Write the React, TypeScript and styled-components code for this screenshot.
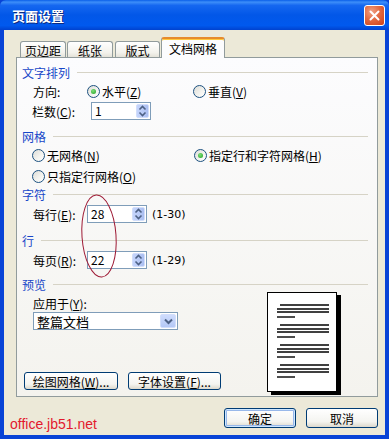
import React from "react";
import styled, { createGlobalStyle } from "styled-components";

const Global = createGlobalStyle`
  html, body { margin: 0; padding: 0; background: #fff; }
  body {
    font-family: "Noto Sans CJK SC", "Noto Sans", "DejaVu Sans", sans-serif;
    font-size: 12px;
    color: #000;
  }
  * { box-sizing: border-box; }
`;

const Window = styled.div`
  position: relative;
  width: 389px;
  height: 439px;
  display: flex;
  flex-direction: column;
  background: #0843d6;
`;

const TitleBar = styled.div`
  height: 30px;
  flex: none;
  display: flex;
  align-items: center;
  justify-content: space-between;
  padding: 0 4px 0 12px;
  background: linear-gradient(
    #0a5fe9 0%,
    #3d8ef9 7%,
    #1567f0 18%,
    #0257e8 50%,
    #0059ee 85%,
    #0042cf 100%
  );
  color: #fff;
  font-weight: bold;
  font-size: 13px;
  text-shadow: 1px 1px #0b2a80;
  border-radius: 6px 6px 0 0;
`;

const CloseButton = styled.div`
  width: 21px;
  height: 21px;
  border: 1px solid #fff;
  border-radius: 3px;
  background: radial-gradient(circle at 35% 30%, #f1a184 0%, #e26a42 45%, #cc3f17 100%);
  display: flex;
  align-items: center;
  justify-content: center;
`;

const Frame = styled.div`
  flex: 1;
  display: flex;
  padding: 0 4px 4px;
`;

const Client = styled.div`
  flex: 1;
  display: flex;
  flex-direction: column;
  background: #ece9d8;
  padding: 7px 7px 0 12px;
`;

const TabRow = styled.div`
  display: flex;
  align-items: flex-end;
  height: 21px;
  margin-bottom: -1px;
  position: relative;
  z-index: 1;
`;

const Tab = styled.div<{ $w: number; $active?: boolean; $gap?: number }>`
  width: ${(p) => p.$w}px;
  margin-left: ${(p) => p.$gap ?? 0}px;
  height: ${(p) => (p.$active ? 21 : 16)}px;
  margin-bottom: ${(p) => (p.$active ? 0 : 1)}px;
  border: 1px solid #919b9c;
  border-bottom: none;
  border-radius: 3px 3px 0 0;
  display: flex;
  align-items: center;
  justify-content: center;
  padding-top: ${(p) => (p.$active ? 0 : 1)}px;
  background: ${(p) =>
    p.$active ? "#fcfcfe" : "linear-gradient(#ffffff, #f3f2ec 70%, #e4e2d8)"};
  border-top: ${(p) => (p.$active ? "2px solid #e68b2c" : "1px solid #919b9c")};
  box-shadow: ${(p) => (p.$active ? "inset 0 1px #ffc83c" : "none")};
`;

const Panel = styled.div`
  height: 340px;
  flex: none;
  border: 1px solid #919b9c;
  background: linear-gradient(#fcfcfe, #f4f3ee);
  padding: 0 9px 0 5px;
  display: flex;
  flex-direction: column;
`;

const Heading = styled.div<{ $top: number }>`
  display: flex;
  align-items: center;
  gap: 7px;
  height: 16px;
  margin-top: ${(p) => p.$top}px;
  color: #1847c8;
  &::after {
    content: "";
    flex: 1;
    height: 1px;
    background: #d6d3c6;
  }
`;

const Row = styled.div<{ $top: number; $indent: number }>`
  display: flex;
  align-items: center;
  height: 18px;
  margin-top: ${(p) => p.$top}px;
  padding-left: ${(p) => p.$indent}px;
`;

const Label = styled.span<{ $w?: number }>`
  width: ${(p) => (p.$w ? `${p.$w}px` : "auto")};
  flex: none;
  white-space: nowrap;
`;

const Key = styled.span`
  text-decoration: underline;
`;

const RadioItem = styled.div<{ $w?: number }>`
  display: flex;
  align-items: center;
  gap: 2px;
  width: ${(p) => (p.$w ? `${p.$w}px` : "auto")};
  flex: none;
  white-space: nowrap;
`;

const RadioCircle = styled.span<{ $checked?: boolean }>`
  width: 13px;
  height: 13px;
  border-radius: 50%;
  border: 1px solid #1c5180;
  background: linear-gradient(135deg, #dcdcd7 0%, #f4f4f0 60%, #ffffff 100%);
  display: flex;
  align-items: center;
  justify-content: center;
  flex: none;
  &::after {
    content: "";
    display: ${(p) => (p.$checked ? "block" : "none")};
    width: 5px;
    height: 5px;
    border-radius: 50%;
    background: radial-gradient(circle at 40% 35%, #7fe07a, #21a121);
  }
`;

const SpinBox = styled.div<{ $w: number }>`
  width: ${(p) => p.$w}px;
  height: 18px;
  border: 1px solid #7f9db9;
  background: #fff;
  display: flex;
  align-items: stretch;
  flex: none;
`;

const SpinValue = styled.span`
  flex: 1;
  padding-left: 3px;
  line-height: 16px;
`;

const SpinButtons = styled.div`
  width: 13px;
  margin: 1px 1px 1px 0;
  border-radius: 2px;
  border: 1px solid #d2defb;
  background: linear-gradient(90deg, #c5d5fc, #b7c9f6 60%, #a9bdf0);
  display: flex;
  flex-direction: column;
  align-items: center;
  justify-content: center;
  gap: 1px;
`;

const Range = styled.span`
  margin-left: 5px;
  font-family: "DejaVu Sans", sans-serif;
  font-size: 11px;
`;

const PreviewArea = styled.div`
  display: flex;
  justify-content: space-between;
  align-items: flex-start;
`;

const LeftCol = styled.div`
  display: flex;
  flex-direction: column;
`;

const ApplyLabel = styled.div`
  height: 16px;
  margin-top: 3px;
  padding-left: 11px;
`;

const Select = styled.div`
  margin: 1px 0 0 11px;
  width: 145px;
  height: 18px;
  border: 1px solid #7f9db9;
  background: #fff;
  display: flex;
  align-items: center;
  justify-content: space-between;
  padding: 0 1px 0 3px;
  font-size: 13px;
`;

const SelectArrow = styled.span`
  width: 16px;
  height: 14px;
  border-radius: 2px;
  border: 1px solid #d2defb;
  background: linear-gradient(#cfdcfd, #b4c8f6);
  display: flex;
  align-items: center;
  justify-content: center;
`;

const ButtonRow = styled.div<{ $top: number; $indent: number }>`
  display: flex;
  gap: 10px;
  margin-top: ${(p) => p.$top}px;
  padding-left: ${(p) => p.$indent}px;
`;

const Button = styled.div<{ $w: number; $h: number; $default?: boolean }>`
  width: ${(p) => p.$w}px;
  height: ${(p) => p.$h}px;
  border: 1px solid #003c74;
  border-radius: 3px;
  background: linear-gradient(#ffffff 0%, #f4f4f0 70%, #dcd8cc 100%);
  display: flex;
  align-items: center;
  justify-content: center;
  white-space: nowrap;
  box-shadow: ${(p) =>
    p.$default ? "inset 0 0 0 1px #cee7ff, inset 0 0 0 2px #98b8ea" : "none"};
`;

const PageWrap = styled.div`
  margin-right: 31px;
  width: 70px;
  height: 100px;
  border: 1px solid #000;
  background: #fff;
  box-shadow: 4px 3px 0 #000;
`;

const BottomRow = styled.div`
  display: flex;
  justify-content: space-between;
  align-items: flex-start;
  margin-top: 11px;
`;

const Footer = styled.div`
  margin: 8px 0 0 -6px;
  font-family: "Liberation Sans", Arial, sans-serif;
  font-size: 14px;
  line-height: 16px;
  color: #e3182d;
`;

const Annotation = styled.svg`
  position: absolute;
  left: 79px;
  top: 192px;
  width: 40px;
  height: 88px;
  pointer-events: none;
`;

const SpinArrows = () => (
  <svg width="9" height="12" viewBox="0 0 9 12">
    <path d="M1.5 4.5 L4.5 1.5 L7.5 4.5" fill="none" stroke="#4d6185" strokeWidth="1.6" />
    <path d="M1.5 7.5 L4.5 10.5 L7.5 7.5" fill="none" stroke="#4d6185" strokeWidth="1.6" />
  </svg>
);

const Spinner: React.FC<{ value: string; w: number }> = ({ value, w }) => (
  <SpinBox $w={w}>
    <SpinValue>{value}</SpinValue>
    <SpinButtons>
      <SpinArrows />
    </SpinButtons>
  </SpinBox>
);

const Radio: React.FC<{ checked?: boolean; w?: number; children: React.ReactNode }> = ({
  checked,
  w,
  children,
}) => (
  <RadioItem $w={w}>
    <RadioCircle $checked={checked} />
    <span>{children}</span>
  </RadioItem>
);

const PageLines = () => {
  const groups = [13, 33, 53, 73];
  return (
    <svg width="68" height="98" viewBox="0 0 68 98">
      {groups.map((y) => (
        <g key={y} stroke="#000" strokeWidth="1.4">
          <line x1="12" y1={y - 1} x2="61" y2={y - 1} />
          <line x1="9" y1={y + 3} x2="61" y2={y + 3} />
          <line x1="9" y1={y + 6} x2="61" y2={y + 6} />
          <line x1="9" y1={y + 11} x2="27" y2={y + 11} />
        </g>
      ))}
    </svg>
  );
};

export default function App() {
  return (
    <>
      <Global />
      <Window>
        <TitleBar>
          <span>页面设置</span>
          <CloseButton>
            <svg width="11" height="11" viewBox="0 0 11 11">
              <path d="M1.5 1.5 L9.5 9.5 M9.5 1.5 L1.5 9.5" stroke="#fff" strokeWidth="2" strokeLinecap="round" />
            </svg>
          </CloseButton>
        </TitleBar>
        <Frame>
          <Client>
            <TabRow>
              <Tab $w={46} $gap={4}>页边距</Tab>
              <Tab $w={46} $gap={1}>纸张</Tab>
              <Tab $w={45} $gap={2}>版式</Tab>
              <Tab $w={64} $gap={1} $active>
                文档网格
              </Tab>
            </TabRow>
            <Panel>
              <Heading $top={6}>文字排列</Heading>
              <Row $top={2} $indent={11}>
                <Label $w={54}>方向:</Label>
                <Radio checked w={106}>
                  水平(<Key>Z</Key>)
                </Radio>
                <Radio>
                  垂直(<Key>V</Key>)
                </Radio>
              </Row>
              <Row $top={2} $indent={10}>
                <Label $w={59}>
                  栏数(<Key>C</Key>):
                </Label>
                <Spinner value="1" w={60} />
              </Row>

              <Heading $top={8}>网格</Heading>
              <Row $top={2} $indent={10}>
                <Radio w={162}>
                  无网格(<Key>N</Key>)
                </Radio>
                <Radio checked>
                  指定行和字符网格(<Key>H</Key>)
                </Radio>
              </Row>
              <Row $top={3} $indent={10}>
                <Radio>
                  只指定行网格(<Key>O</Key>)
                </Radio>
              </Row>

              <Heading $top={1}>字符</Heading>
              <Row $top={3} $indent={11}>
                <Label $w={54}>
                  每行(<Key>E</Key>):
                </Label>
                <Spinner value="28" w={60} />
                <Range>(1-30)</Range>
              </Row>

              <Heading $top={9}>行</Heading>
              <Row $top={3} $indent={11}>
                <Label $w={54}>
                  每页(<Key>R</Key>):
                </Label>
                <Spinner value="22" w={60} />
                <Range>(1-29)</Range>
              </Row>

              <Heading $top={7}>预览</Heading>
              <PreviewArea>
                <LeftCol>
                  <ApplyLabel>
                    应用于(<Key>Y</Key>):
                  </ApplyLabel>
                  <Select>
                    <span>整篇文档</span>
                    <SelectArrow>
                      <svg width="9" height="7" viewBox="0 0 9 7">
                        <path d="M1 1.5 L4.5 5 L8 1.5" fill="none" stroke="#4d6185" strokeWidth="2" />
                      </svg>
                    </SelectArrow>
                  </Select>
                  <ButtonRow $top={42} $indent={2}>
                    <Button $w={94} $h={18}>
                      绘图网格(<Key>W</Key>)...
                    </Button>
                    <Button $w={93} $h={18}>
                      字体设置(<Key>F</Key>)...
                    </Button>
                  </ButtonRow>
                </LeftCol>
                <PageWrap>
                  <PageLines />
                </PageWrap>
              </PreviewArea>
            </Panel>
            <BottomRow>
              <Footer>office.jb51.net</Footer>
              <ButtonRow $top={0} $indent={0}>
                <Button $w={72} $h={20} $default>
                  确定
                </Button>
                <Button $w={72} $h={20}>
                  取消
                </Button>
              </ButtonRow>
            </BottomRow>
          </Client>
        </Frame>
        <Annotation viewBox="0 0 40 88">
          <ellipse
            cx="20"
            cy="44"
            rx="17"
            ry="41"
            fill="none"
            stroke="#9e1a35"
            strokeWidth="1"
            transform="rotate(-4 20 44)"
          />
        </Annotation>
      </Window>
    </>
  );
}
